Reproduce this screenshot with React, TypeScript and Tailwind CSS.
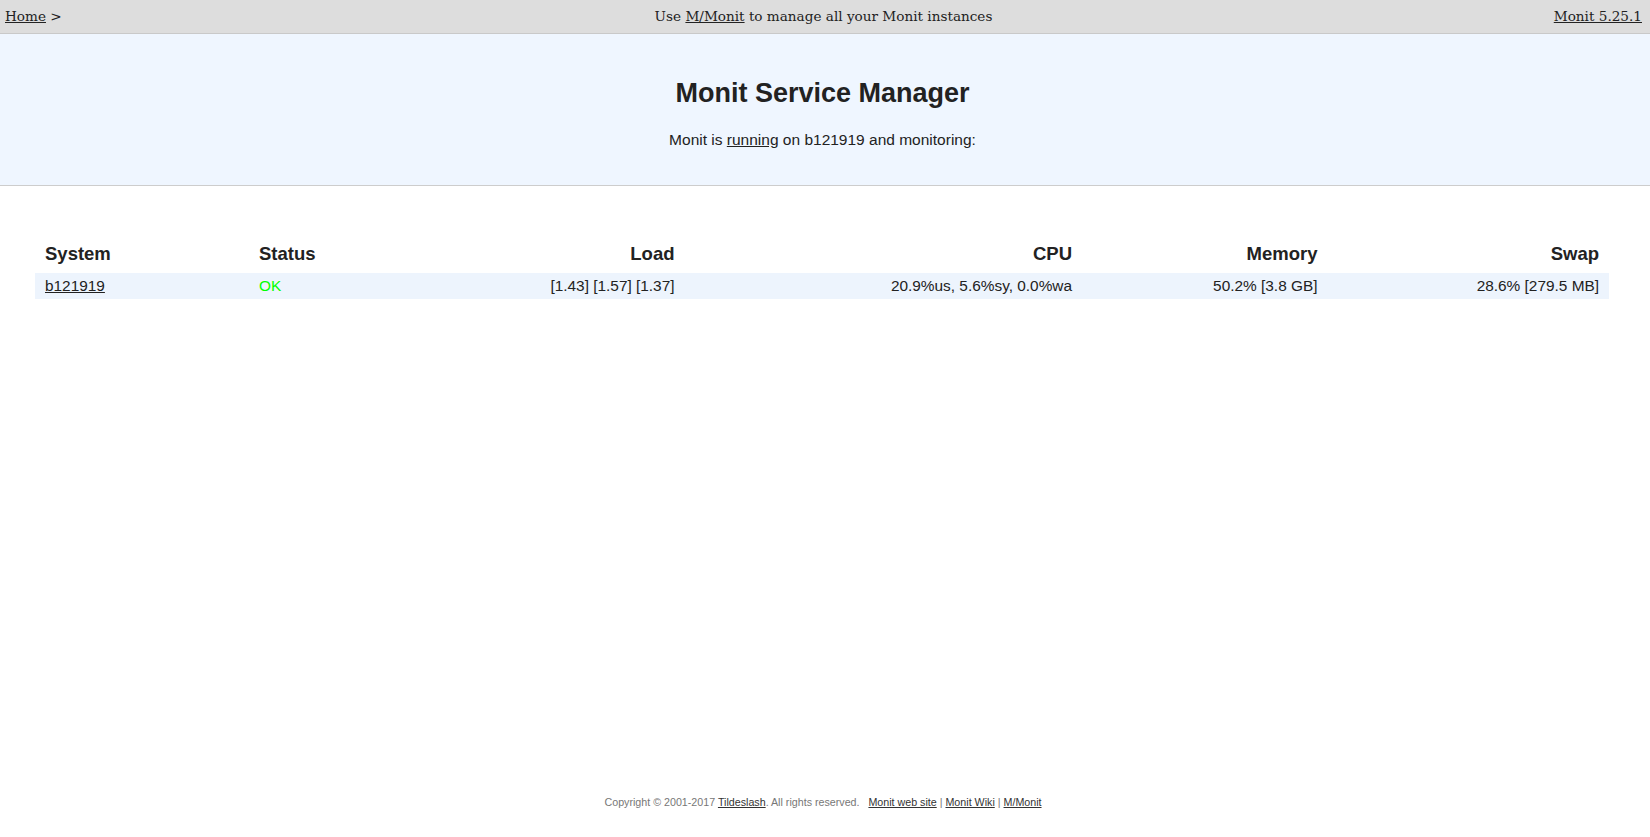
const serif = "font-['DejaVu_Serif',serif]"
const sans = "font-['Liberation_Sans',Arial,sans-serif]"

const TopBar = () => (
  <div
    className={`${serif} flex h-[34px] items-center justify-between border-b border-[#c9c9c9] bg-[#dddddd] pl-[5px] pr-[8px] text-[13.6px] text-[#222]`}
  >
    <div className="w-[200px]">
      <a className="underline" href="#">
        Home
      </a>{" "}
      &gt;
    </div>
    <div>
      Use{" "}
      <a className="underline" href="#">
        M/Monit
      </a>{" "}
      to manage all your Monit instances
    </div>
    <div className="w-[200px] text-right">
      <a className="underline" href="#">
        Monit 5.25.1
      </a>
    </div>
  </div>
)

const Header = () => (
  <div className="flex flex-col items-center border-b border-[#cdcdcd] bg-[#eff6ff] pb-[35px] pr-[5px] pt-[43px] text-[#222]">
    <h1 className="text-[27px] font-bold leading-[32px]">Monit Service Manager</h1>
    <p className="mt-[21px] text-[15.5px] leading-[20px]">
      Monit is{" "}
      <a className="underline" href="#">
        running
      </a>{" "}
      on b121919 and monitoring:
    </p>
  </div>
)

const cols = "grid grid-cols-[214px_200px_235.5px_397.5px_245.5px_281.5px]"

const SystemTable = () => (
  <div className="pl-[35px] pr-[41px] pt-[54px] text-[#222]">
    <div className={`${cols} h-[28px] items-center text-[18.5px] font-bold`}>
      <div className="pl-[10px]">System</div>
      <div className="pl-[10px]">Status</div>
      <div className="pr-[10px] text-right">Load</div>
      <div className="pr-[10px] text-right">CPU</div>
      <div className="pr-[10px] text-right">Memory</div>
      <div className="pr-[10px] text-right">Swap</div>
    </div>
    <div className={`${cols} mt-[5px] h-[26px] items-center bg-[#edf4fd] text-[15.4px]`}>
      <div className="pl-[10px]">
        <a className="underline" href="#">
          b121919
        </a>
      </div>
      <div className="pl-[10px] text-[#00ff00]">OK</div>
      <div className="pr-[10px] text-right">[1.43] [1.57] [1.37]</div>
      <div className="pr-[10px] text-right">20.9%us, 5.6%sy, 0.0%wa</div>
      <div className="pr-[10px] text-right">50.2% [3.8 GB]</div>
      <div className="pr-[10px] text-right">28.6% [279.5 MB]</div>
    </div>
  </div>
)

const Footer = () => (
  <div className="mt-auto pb-[28px] pr-[4px] text-center text-[10.7px] leading-[14px] text-[#777]">
    Copyright &copy; 2001-2017{" "}
    <a className="text-[#333] underline" href="#">
      Tildeslash
    </a>
    . All rights reserved.&nbsp;&nbsp;&nbsp;
    <a className="text-[#333] underline" href="#">
      Monit web site
    </a>{" "}
    |{" "}
    <a className="text-[#333] underline" href="#">
      Monit Wiki
    </a>{" "}
    |{" "}
    <a className="text-[#333] underline" href="#">
      M/Monit
    </a>
  </div>
)

export default function App() {
  return (
    <div className={`${sans} flex min-h-screen flex-col bg-white`}>
      <TopBar />
      <Header />
      <SystemTable />
      <Footer />
    </div>
  )
}
